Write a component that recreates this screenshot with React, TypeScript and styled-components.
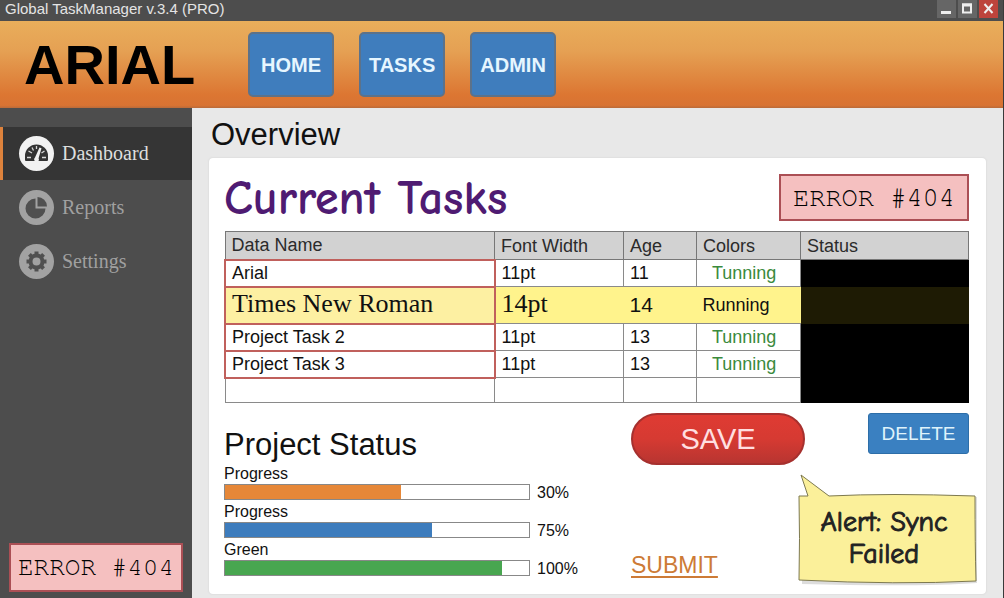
import React from "react";
import styled, { createGlobalStyle, css } from "styled-components";

const sans = `"Liberation Sans", Arial, sans-serif`;
const serif = `"Liberation Serif", "Times New Roman", serif`;
const mono = `"Nimbus Mono PS", "Courier 10 Pitch", FreeMono, "Courier New", "Liberation Mono", monospace`;
const comic = `"Comic Sans MS", "Comic Neue", Lato, sans-serif`;

const GlobalStyle = createGlobalStyle`
  *, *::before, *::after { box-sizing: border-box; }
  body { margin: 0; background: #e8e8e8; color: #111; font-family: ${sans}; }
  button { font-family: inherit; cursor: pointer; padding: 0; }
  h1, h2, h3, p, ul { margin: 0; padding: 0; font-weight: 400; }
`;

const AppWindow = styled.div`
  display: flex;
  flex-direction: column;
  min-height: 100vh;
  border-right: 1px solid #3a3a3a;
`;

const TitleBar = styled.div`
  display: flex;
  justify-content: space-between;
  height: 21px;
  padding: 0 5px;
  background: #4d4d4d;
  color: #e4e4e4;
  font-size: 15px;
  line-height: 17px;
`;

const WindowControls = styled.div`
  display: flex;
  gap: 2px;
`;

const WindowButton = styled.button<{ $close?: boolean }>`
  display: flex;
  justify-content: center;
  width: 19px;
  height: 18px;
  border: 0;
  background: ${(p) => (p.$close ? "#bd433c" : "#666")};
  color: #eee;
`;

const Header = styled.header`
  display: flex;
  align-items: center;
  gap: 53px;
  height: 87px;
  padding: 0 24px;
  background: linear-gradient(#e9ae5b 0%, #e5a053 35%, #dc7632 85%, #d87333 97%, #b96a3a 100%);
`;

const Brand = styled.div`
  color: #000;
  font-size: 56px;
  line-height: 64px;
  font-weight: 700;
`;

const Nav = styled.nav`
  display: flex;
  gap: 25px;
`;

const NavButton = styled.button`
  width: 86px;
  height: 65px;
  padding-top: 2px;
  border: 2px solid #5c728a;
  border-radius: 5px;
  background: #3f7dbd;
  color: #e6f6ff;
  font-size: 20px;
  font-weight: 700;
`;

const Body = styled.div`
  display: flex;
  flex: 1;
`;

const Sidebar = styled.aside`
  display: flex;
  flex: 0 0 192px;
  flex-direction: column;
  justify-content: space-between;
  padding: 19px 0 6px;
  background: #4d4d4d;
`;

const Menu = styled.ul`
  display: grid;
  gap: 1px;
  list-style: none;
`;

const MenuLink = styled.a<{ $active?: boolean }>`
  display: flex;
  align-items: center;
  gap: 8px;
  height: 53px;
  padding-left: 16px;
  border-left: 3px solid ${(p) => (p.$active ? "#dd823c" : "transparent")};
  background: ${(p) => (p.$active ? "#353535" : "transparent")};
  color: ${(p) => (p.$active ? "#dedede" : "#a0a0a0")};
  font-family: ${serif};
  font-size: 20px;
  text-decoration: none;
`;

const IconDisc = styled.span<{ $active?: boolean }>`
  display: flex;
  width: 35px;
  height: 35px;
  border-radius: 50%;
  background: ${(p) => (p.$active ? "#f2f2f2" : "#a2a2a2")};
  color: ${(p) => (p.$active ? "#333" : "#505050")};
`;

const ErrorBadge = styled.div<{ $compact?: boolean }>`
  border: 2px solid #ab4f55;
  background: #f5c0c0;
  color: #000;
  font-family: ${mono};
  white-space: nowrap;
  text-align: center;
  ${(p) =>
    p.$compact
      ? css`
          margin: 0 9px;
          font-size: 26px;
          line-height: 45px;
        `
      : css`
          width: 190px;
          font-size: 27px;
          line-height: 43px;
        `}
`;

const Main = styled.main`
  display: flex;
  flex: 1;
  flex-direction: column;
  min-width: 0;
  padding: 9px 17px 4px;
`;

const PageTitle = styled.h1`
  padding-left: 2px;
  font-size: 31px;
  line-height: 36px;
`;

const Card = styled.section`
  display: flex;
  flex: 1;
  flex-direction: column;
  margin-top: 5px;
  padding: 16px 17px 12px 15px;
  border-radius: 4px;
  background: #fff;
  box-shadow: 0 0 2px #ccc;
`;

const CardHeader = styled.div`
  display: flex;
  align-items: flex-start;
  justify-content: space-between;
  height: 57px;
`;

const CardTitle = styled.h2`
  color: #4f1b72;
  font-family: ${comic};
  font-size: 48px;
  line-height: 50px;
  font-weight: 700;
`;

const TaskTable = styled.table`
  width: 100%;
  border-collapse: collapse;
  table-layout: fixed;
  font-size: 18px;
  line-height: 20px;
`;

const HeadCell = styled.th<{ $width?: number }>`
  ${(p) => p.$width && `width: ${p.$width}px;`}
  height: 28px;
  padding: 0 6px;
  border: 1px solid #777;
  background: #d2d2d2;
  color: #2b2b2b;
  font-weight: 400;
  text-align: left;
`;

const Row = styled.tr<{ $highlight?: boolean; $height: number }>`
  height: ${(p) => p.$height}px;
  background: ${(p) => (p.$highlight ? "#fff38c" : "#fff")};
`;

const Cell = styled.td<{ $plain?: boolean }>`
  padding: 0 6px;
  border: ${(p) => (p.$plain ? "0" : "1px solid #8a8a8a")};
`;

const NameCell = styled(Cell)<{ $highlight?: boolean }>`
  border: 2px solid #c0605c;
  background: ${(p) => (p.$highlight ? "#fdf0a2" : "#fff")};
`;

const StatusCell = styled.td<{ $highlight?: boolean }>`
  padding: 0;
  background: ${(p) => (p.$highlight ? "#1e1b04" : "#000")};
`;

const Large = styled.span`
  font-family: ${serif};
  font-size: 26px;
`;

const Medium = styled.span`
  font-size: 21px;
`;

const Good = styled.span`
  padding-left: 9px;
  color: #3a8a3c;
`;

const Bottom = styled.div`
  display: flex;
  flex: 1;
  justify-content: space-between;
  padding-top: 10px;
`;

const StatusPanel = styled.section`
  padding-top: 15px;
`;

const StatusTitle = styled.h2`
  font-size: 31px;
  line-height: 34px;
`;

const Meter = styled.div`
  display: grid;
  grid-template-columns: 306px auto;
  grid-template-rows: 22px 16px;
  column-gap: 7px;
  font-size: 16px;
`;

const MeterLabel = styled.span`
  grid-column: 1 / -1;
  line-height: 24px;
`;

const MeterTrack = styled.div`
  border: 1px solid #888;
  background: #fff;
`;

const MeterFill = styled.div`
  height: 100%;
`;

const MeterValue = styled.span`
  line-height: 18px;
`;

const Actions = styled.div`
  display: flex;
  flex: 0 0 338px;
  flex-direction: column;
  justify-content: space-between;
`;

const ActionRow = styled.div`
  display: flex;
  align-items: flex-start;
  justify-content: space-between;
`;

const SaveButton = styled.button`
  width: 174px;
  height: 52px;
  border: 2px solid #a6302e;
  border-radius: 26px;
  background: linear-gradient(#df3b33, #d63a32 50%, #b83531);
  color: #ffdfe0;
  font-size: 29px;
`;

const DeleteButton = styled.button`
  width: 101px;
  height: 41px;
  border: 1px solid #2d6ea8;
  border-radius: 3px;
  background: #3a80c1;
  color: #dff3fb;
  font-size: 19px;
`;

const SubmitLink = styled.a`
  align-self: flex-end;
  margin-bottom: 4px;
  color: #cd7b36;
  font-size: 23px;
  line-height: 26px;
  text-underline-offset: 3px;
`;

const Alert = styled.div`
  position: relative;
  width: 180px;
  margin-right: -9px;
  padding: 32px 8px 12px 0;
  color: #222;
  font-family: ${comic};
  font-size: 28px;
  line-height: 32px;
  text-align: center;
`;

const AlertShape = styled.svg`
  position: absolute;
  inset: 0;
  width: 100%;
  height: 100%;
  overflow: visible;
`;

const AlertText = styled.p`
  position: relative;
  -webkit-text-stroke: 1px #222;
`;

const GaugeIcon = () => (
  <svg width="35" height="35" viewBox="0 0 35 35" aria-hidden="true">
    <path
      d="M6 24V20A11.5 11.5 0 0 1 29 20V24Q29 25 28 25H7Q6 25 6 24Z"
      fill="currentColor"
    />
    <path
      d="M8 21.5H12M9.5 15L13 17M17.5 10V13M13 11.5L14.5 14.5M27 21.5H23M25.5 15L22.5 17"
      stroke="#d8d8d8"
      strokeWidth="1.3"
    />
    <path d="M20.5 11.5L22.5 12.3L19.6 22.2A2.4 2.4 0 1 1 16 21.6Z" fill="#f2f2f2" />
  </svg>
);

const PieIcon = () => (
  <svg width="35" height="35" viewBox="0 0 35 35" fill="currentColor" aria-hidden="true">
    <path d="M16.5 18.5V8.5A10 10 0 1 0 26.5 18.5Z" />
    <path d="M18.5 16.5V7A9.5 9.5 0 0 1 28 16.5Z" />
  </svg>
);

const GearIcon = () => (
  <svg width="35" height="35" viewBox="0 0 35 35" fill="none" stroke="currentColor" aria-hidden="true">
    <circle cx="17.5" cy="17.5" r="6" strokeWidth="4" />
    {[0, 45, 90, 135].map((angle) => (
      <path
        key={angle}
        d="M17.5 7.5V11M17.5 24V27.5"
        strokeWidth="4"
        transform={`rotate(${angle} 17.5 17.5)`}
      />
    ))}
  </svg>
);

const menu = [
  { label: "Dashboard", icon: <GaugeIcon />, active: true },
  { label: "Reports", icon: <PieIcon /> },
  { label: "Settings", icon: <GearIcon /> },
];

const meters = [
  { label: "Progress", value: "30%", fill: 58, color: "#e68738" },
  { label: "Progress", value: "75%", fill: 68, color: "#3d7cbd" },
  { label: "Green", value: "100%", fill: 91, color: "#48a650" },
];

const tasks = [
  { name: "Arial", width: "11pt", age: "11", state: "Tunning" },
  { name: "Times New Roman", width: "14pt", age: "14", state: "Running", highlight: true },
  { name: "Project Task 2", width: "11pt", age: "13", state: "Tunning" },
  { name: "Project Task 3", width: "11pt", age: "13", state: "Tunning" },
];

export default function App() {
  return (
    <>
      <GlobalStyle />
      <AppWindow>
        <TitleBar>
          <span>Global TaskManager v.3.4 (PRO)</span>
          <WindowControls>
            <WindowButton aria-label="Minimize">
              <svg width="19" height="18" viewBox="0 0 19 18">
                <path d="M4 12.5H14" stroke="currentColor" strokeWidth="3" />
              </svg>
            </WindowButton>
            <WindowButton aria-label="Maximize">
              <svg width="19" height="18" viewBox="0 0 19 18" fill="none" stroke="currentColor">
                <rect x="5" y="4.5" width="8" height="8" strokeWidth="2" />
                <path d="M4 5H14" strokeWidth="3" />
              </svg>
            </WindowButton>
            <WindowButton aria-label="Close" $close>
              <svg width="19" height="18" viewBox="0 0 19 18">
                <path d="M5.5 4L13.5 13M13.5 4L5.5 13" stroke="currentColor" strokeWidth="2" />
              </svg>
            </WindowButton>
          </WindowControls>
        </TitleBar>

        <Header>
          <Brand>ARIAL</Brand>
          <Nav>
            <NavButton>HOME</NavButton>
            <NavButton>TASKS</NavButton>
            <NavButton>ADMIN</NavButton>
          </Nav>
        </Header>

        <Body>
          <Sidebar>
            <Menu>
              {menu.map((item) => (
                <li key={item.label}>
                  <MenuLink href="#" $active={item.active}>
                    <IconDisc $active={item.active}>{item.icon}</IconDisc>
                    {item.label}
                  </MenuLink>
                </li>
              ))}
            </Menu>
            <ErrorBadge $compact>ERROR #404</ErrorBadge>
          </Sidebar>

          <Main>
            <PageTitle>Overview</PageTitle>
            <Card>
              <CardHeader>
                <CardTitle>Current Tasks</CardTitle>
                <ErrorBadge>ERROR #404</ErrorBadge>
              </CardHeader>

              <TaskTable>
                <thead>
                  <tr>
                    <HeadCell>Data Name</HeadCell>
                    <HeadCell $width={129}>Font Width</HeadCell>
                    <HeadCell $width={73}>Age</HeadCell>
                    <HeadCell $width={104}>Colors</HeadCell>
                    <HeadCell $width={168}>Status</HeadCell>
                  </tr>
                </thead>
                <tbody>
                  {tasks.map((t) => (
                    <Row key={t.name} $highlight={t.highlight} $height={t.highlight ? 37 : 27}>
                      <NameCell $highlight={t.highlight}>
                        {t.highlight ? <Large>{t.name}</Large> : t.name}
                      </NameCell>
                      <Cell $plain={t.highlight}>{t.highlight ? <Large>{t.width}</Large> : t.width}</Cell>
                      <Cell $plain={t.highlight}>{t.highlight ? <Medium>{t.age}</Medium> : t.age}</Cell>
                      <Cell $plain={t.highlight}>{t.highlight ? t.state : <Good>{t.state}</Good>}</Cell>
                      <StatusCell $highlight={t.highlight} />
                    </Row>
                  ))}
                  <Row $height={25}>
                    <Cell />
                    <Cell />
                    <Cell />
                    <Cell />
                    <StatusCell />
                  </Row>
                </tbody>
              </TaskTable>

              <Bottom>
                <StatusPanel>
                  <StatusTitle>Project Status</StatusTitle>
                  {meters.map((m, i) => (
                    <Meter key={i}>
                      <MeterLabel id={`meter-${i}`}>{m.label}</MeterLabel>
                      <MeterTrack role="progressbar" aria-labelledby={`meter-${i}`} aria-valuetext={m.value}>
                        <MeterFill style={{ width: `${m.fill}%`, background: m.color }} />
                      </MeterTrack>
                      <MeterValue>{m.value}</MeterValue>
                    </Meter>
                  ))}
                </StatusPanel>

                <Actions>
                  <ActionRow>
                    <SaveButton>SAVE</SaveButton>
                    <DeleteButton>DELETE</DeleteButton>
                  </ActionRow>
                  <ActionRow>
                    <SubmitLink href="#">SUBMIT</SubmitLink>
                    <Alert role="alert">
                      <AlertShape viewBox="0 0 180 108" preserveAspectRatio="none" aria-hidden="true">
                        <path
                          d="M4 24L179 23L179 109Q120 113 4 110Z"
                          fill="#bbb"
                          opacity="0.5"
                        />
                        <path
                          d="M3 1L31 22Q90 19 177 22Q177 70 178 107Q100 111 1 106Q2 65 1 22L10 22Z"
                          fill="#fbf09a"
                          stroke="#7d7950"
                          strokeWidth="1"
                        />
                      </AlertShape>
                      <AlertText>
                        Alert: Sync
                        <br />
                        Failed
                      </AlertText>
                    </Alert>
                  </ActionRow>
                </Actions>
              </Bottom>
            </Card>
          </Main>
        </Body>
      </AppWindow>
    </>
  );
}
